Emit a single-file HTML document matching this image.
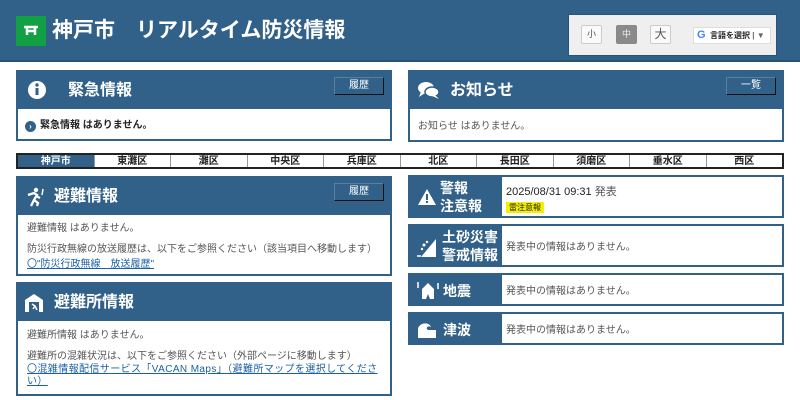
<!DOCTYPE html>
<html><head><meta charset="utf-8"><style>
*{box-sizing:border-box;margin:0;padding:0}
body{width:800px;height:400px;overflow:hidden;background:#fff;font-family:"Liberation Sans","Noto Sans CJK JP",sans-serif;position:relative;color:#333}
.abs{position:absolute}
.hdr{left:0;top:0;width:800px;height:62px;background:#316189;border-bottom:2px solid #285273}
.logo{left:16px;top:16px;width:30px;height:30px;background:#11a043}
.title{left:52px;top:17px;color:#fff;font-size:21px;line-height:28px;font-weight:bold;white-space:nowrap}
.widget{left:568px;top:14px;width:209px;height:42px;background:#efefef;border:1px solid #25557c}
.sz{position:absolute;top:10px;width:21px;height:19px;border:1px solid #ccc;background:#fafafa;font-size:9px;text-align:center;line-height:17px;border-radius:2px;color:#555}
.gt{position:absolute;left:124px;top:12px;width:78px;height:17px;background:#fff;border:1px solid #ddd;font-size:8px;line-height:15px;padding-left:16px;color:#222;font-weight:bold;white-space:nowrap;overflow:hidden}
.panel{border:2px solid #316189;background:#fff}
.ph{background:#316189;height:37px;color:#fff;font-size:16px;font-weight:bold;position:relative}
.ph span{position:absolute;left:50px;top:9px;line-height:20px}
.btn{position:absolute;top:5px;right:6px;width:50px;height:18px;border:1px solid #111;border-top-color:#5a7f9f;border-left-color:#5a7f9f;background:#316189;color:#fff;font-size:10px;text-align:center;line-height:16px;font-weight:normal}
.body{font-size:10px;padding:9px 8px;color:#555;line-height:14px}
.dist{left:16px;top:153px;width:768px;height:16px;border:2px solid #222;display:flex}
.dist div{flex:1;border-left:1px solid #999;font-size:10px;font-weight:bold;text-align:center;line-height:13px;height:12px;color:#222}
.dist div:first-child{border-left:none;background:#316189;color:#fff}
.row{left:408px;width:376px;border:2px solid #316189;display:flex;background:#fff}
.lab{width:92px;background:#316189;color:#fff;font-weight:bold;font-size:14px;position:relative}
.txt{font-size:10px;color:#555;padding-left:4px;display:flex;align-items:center}
a{color:#1a5fa8;text-decoration:underline}
</style></head><body>
<div class="abs hdr"></div>
<div class="abs logo"><svg width="30" height="30"><path d="M8 11 H22 M11 11 v8 M19 11 v8 M11 15 h8" stroke="#fff" stroke-width="2.5" fill="none"/></svg></div>
<div class="abs title">神戸市　リアルタイム防災情報</div>
<div class="abs widget">
<div class="sz" style="left:12px">小</div>
<div class="sz" style="left:47px;background:#8a8a8a;color:#eee;border-color:#888">中</div>
<div class="sz" style="left:81px;font-size:12px">大</div>
<div class="gt"><span style="position:absolute;left:3px;top:0;color:#4285f4;font-size:11px">G</span>言語を選択 <span style="color:#666">| ▼</span></div>
</div>

<div class="abs panel" style="left:16px;top:70px;width:376px;height:71px">
<div class="ph"><svg style="position:absolute;left:9px;top:8px" width="20" height="20"><circle cx="10" cy="10" r="9" fill="#fff"/><rect x="8.5" y="8" width="3" height="7" fill="#316189"/><circle cx="10" cy="5" r="1.7" fill="#316189"/></svg><span>緊急情報</span><div class="btn">履歴</div></div>
<div class="body" style="color:#222;font-weight:bold;padding-top:10px"><span style="display:inline-block;width:11px;height:11px;border-radius:50%;background:#316189;color:#fff;font-size:8px;text-align:center;line-height:11px;margin:0 4px 0 -1px;vertical-align:-1px">›</span>緊急情報 はありません。</div>
</div>
<div class="abs panel" style="left:408px;top:70px;width:376px;height:72px">
<div class="ph"><svg style="position:absolute;left:7px;top:8px" width="24" height="22"><ellipse cx="9" cy="8" rx="8" ry="6" fill="#fff"/><path d="M4 12 L2 17 L8 13Z" fill="#fff"/><ellipse cx="15" cy="12" rx="7" ry="5" fill="#fff" stroke="#316189" stroke-width="1.5"/><path d="M18 15 L22 19 L15 16Z" fill="#fff"/></svg><span style="left:40px">お知らせ</span><div class="btn">一覧</div></div>
<div class="body" style="padding-top:11px">お知らせ はありません。</div>
</div>

<div class="abs dist"><div>神戸市</div><div>東灘区</div><div>灘区</div><div>中央区</div><div>兵庫区</div><div>北区</div><div>長田区</div><div>須磨区</div><div>垂水区</div><div>西区</div></div>

<div class="abs panel" style="left:16px;top:176px;width:376px;height:100px">
<div class="ph"><svg style="position:absolute;left:7px;top:9px" width="22" height="20"><circle cx="11" cy="3" r="2.2" fill="#fff"/><path d="M3 8 L9 6 L12 8 L9 13 L13 16 L12 19 M9 13 L6 19 M11 9 L15 11" stroke="#fff" stroke-width="2.3" fill="none"/><path d="M18 2 L17 8" stroke="#fff" stroke-width="1.5"/></svg><span style="left:36px">避難情報</span><div class="btn">履歴</div></div>
<div class="body" style="line-height:15px;padding-top:6px;padding-left:9px">避難情報 はありません。<div style="height:6px"></div>防災行政無線の放送履歴は、以下をご参照ください（該当項目へ移動します）<br><a style="line-height:10px">〇"防災行政無線　放送履歴"</a></div>
</div>
<div class="abs panel" style="left:16px;top:282px;width:376px;height:114px">
<div class="ph"><svg style="position:absolute;left:6px;top:9px" width="20" height="20"><path d="M1 7 L10 1 L19 7 V19 H1Z" fill="#fff"/><path d="M5 9 h10 v10 h-10z" fill="#316189"/><path d="M8 11 L11 13 L9 16 M11 13 L13 17" stroke="#fff" stroke-width="1.5" fill="none"/></svg><span style="left:36px">避難所情報</span></div>
<div class="body" style="line-height:15px;padding-top:7px;padding-left:0">
<div style="padding-left:9px">避難所情報 はありません。<div style="height:6px"></div>避難所の混雑状況は、以下をご参照ください（外部ページに移動します）</div>
<a style="line-height:12px;display:block;padding-left:9px;letter-spacing:0.4px">〇混雑情報配信サービス「VACAN Maps」（避難所マップを選択してください）</a></div>
</div>

<div class="abs row" style="top:175px;height:43px"><div class="lab"><svg style="position:absolute;left:7px;top:11px" width="20" height="18"><path d="M10 1 L19 17 H1Z" fill="#fff"/><rect x="9" y="6" width="2" height="6" fill="#316189"/><rect x="9" y="13" width="2" height="2" fill="#316189"/></svg><div style="position:absolute;left:30px;top:2px;line-height:18px">警報<br>注意報</div></div><div class="txt" style="display:block;padding-top:8px;font-size:11px;color:#222;line-height:15px">2025/08/31 09:31 <span style="color:#555">発表</span><br><span style="background:#f5f000;font-size:8px;padding:1px 3px;line-height:10px">雷注意報</span></div></div>
<div class="abs row" style="top:224px;height:43px"><div class="lab"><svg style="position:absolute;left:6px;top:10px" width="22" height="22"><path d="M5 21 L20 3 V21Z" fill="#fff"/><circle cx="8" cy="9" r="1.5" fill="#fff"/><circle cx="11" cy="6" r="1.2" fill="#fff"/><circle cx="6" cy="13" r="1.2" fill="#fff"/><path d="M1 20 h4" stroke="#fff" stroke-width="1.5"/></svg><div style="position:absolute;left:32px;top:2px;line-height:18px">土砂災害<br>警戒情報</div></div><div class="txt">発表中の情報はありません。</div></div>
<div class="abs row" style="top:273px;height:33px"><div class="lab"><svg style="position:absolute;left:6px;top:4px" width="24" height="22"><path d="M6 20 V10 L12 4 L18 10 V20 H14 L12 15 L10 20Z" fill="#fff"/><path d="M2 3 v6 M22 4 v6" stroke="#fff" stroke-width="1.5"/></svg><div style="position:absolute;left:33px;top:6px;line-height:20px">地震</div></div><div class="txt">発表中の情報はありません。</div></div>
<div class="abs row" style="top:312px;height:33px"><div class="lab"><svg style="position:absolute;left:6px;top:6px" width="22" height="20"><path d="M2 18 V8 C5 2 13 2 15 7 C12 5 9 8 12 10 L20 10 V18Z" fill="#fff"/></svg><div style="position:absolute;left:33px;top:6px;line-height:20px">津波</div></div><div class="txt">発表中の情報はありません。</div></div>
</body></html>
